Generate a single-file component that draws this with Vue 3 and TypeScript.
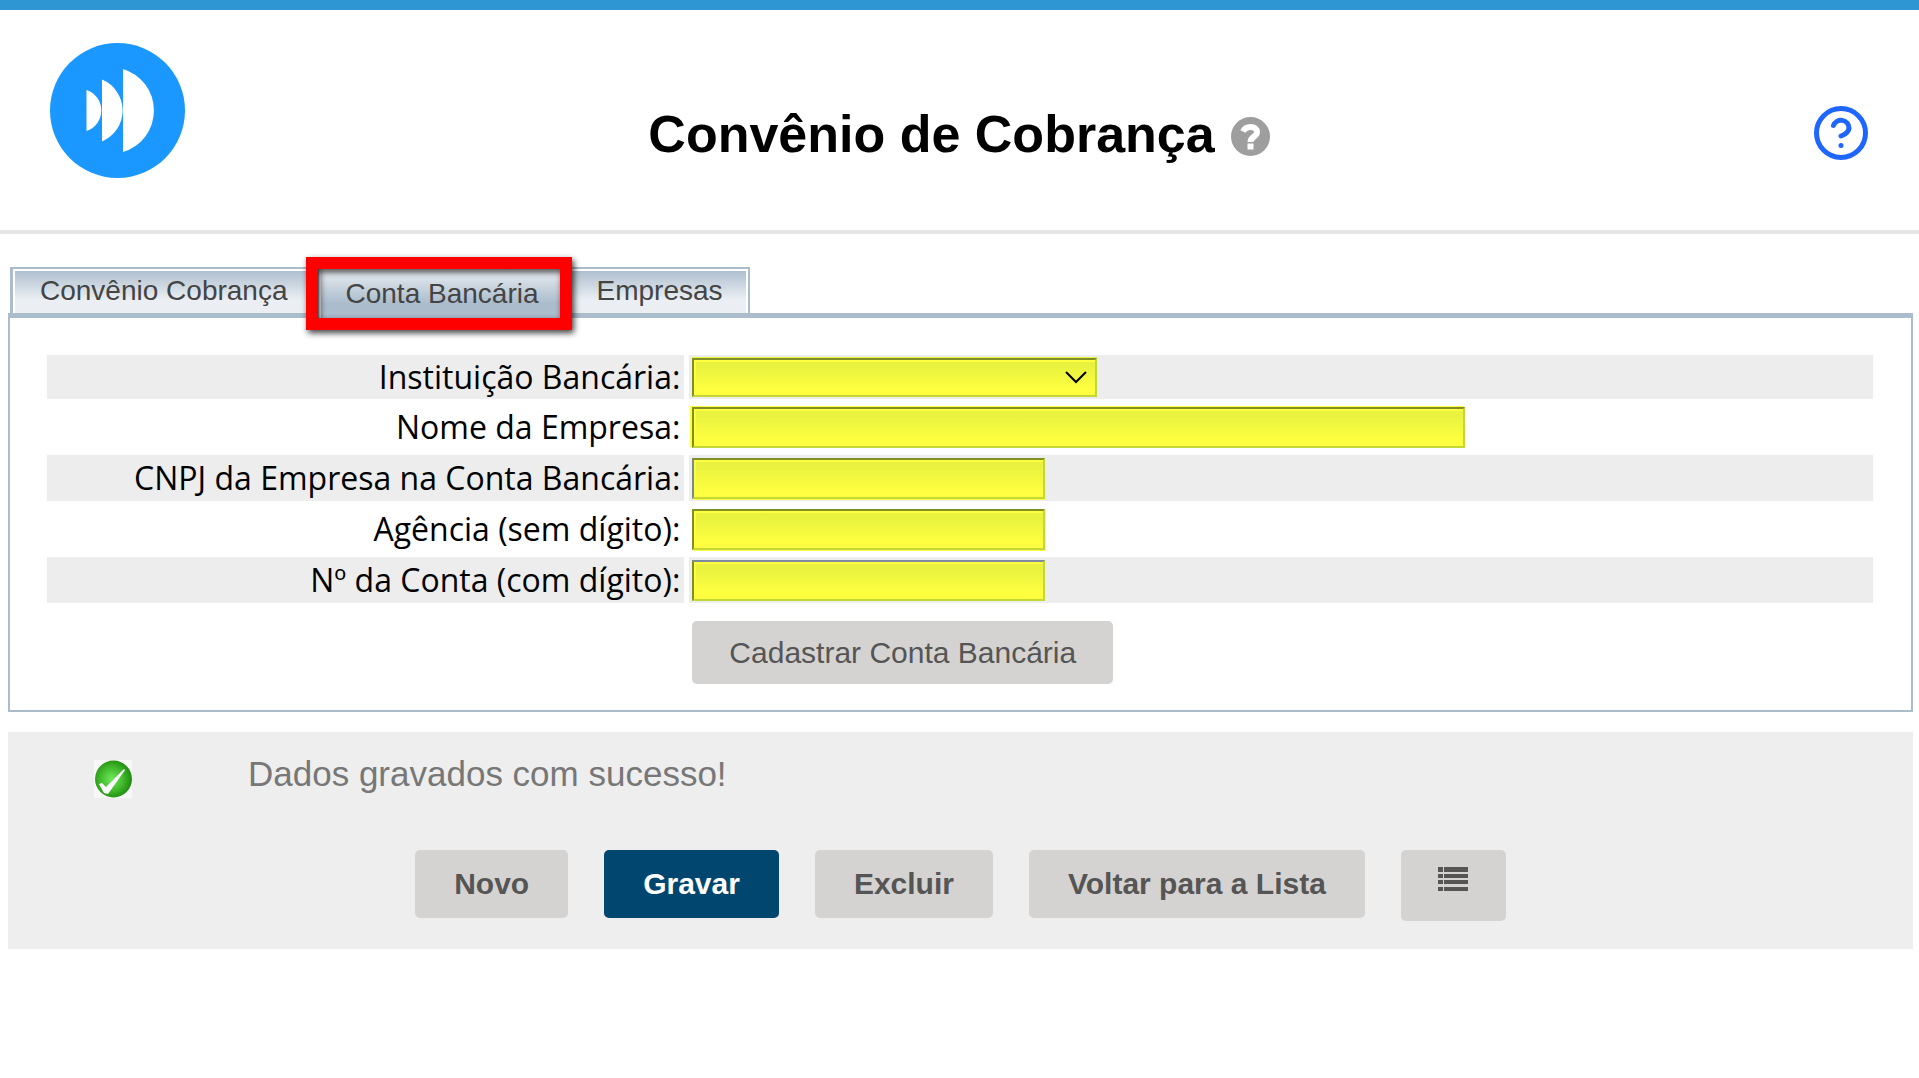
<script setup lang="ts">
import { ref } from 'vue'

interface Field {
  id: string
  label: string
  kind: 'select' | 'text'
  size: 'bank' | 'wide' | 'short'
  tone: string
}

interface Action {
  label: string
  primary?: boolean
}

const tabs = ['Convênio Cobrança', 'Conta Bancária', 'Empresas']
const activeTab = ref(1)

const fields: Field[] = [
  { id: 'banco', label: 'Instituição Bancária:', kind: 'select', size: 'bank', tone: 'glow-top' },
  { id: 'nome', label: 'Nome da Empresa:', kind: 'text', size: 'wide', tone: 'glow-start' },
  { id: 'cnpj', label: 'CNPJ da Empresa na Conta Bancária:', kind: 'text', size: 'short', tone: 'glow-end edge-left' },
  { id: 'agencia', label: 'Agência (sem dígito):', kind: 'text', size: 'short', tone: 'glow-end' },
  { id: 'conta', label: 'Nº da Conta (com dígito):', kind: 'text', size: 'short', tone: 'edge-top' },
]

const actions: Action[] = [
  { label: 'Novo' },
  { label: 'Gravar', primary: true },
  { label: 'Excluir' },
  { label: 'Voltar para a Lista' },
]
</script>

<template>
  <div class="page">
    <header class="header">
      <svg class="logo" viewBox="0 0 135 135" aria-hidden="true">
        <circle cx="67.5" cy="67.5" r="67.5" fill="#1a98ff" />
        <path
          fill="#fff"
          d="M36.500 47a21.600 21.600 0 0 1 0 41zM52 36.500a33.600 33.600 0 0 1 0 62zM73 26a43.300 43.300 0 0 1 0 83z"
        />
      </svg>
      <div class="title">
        <h1>Convênio de Cobrança</h1>
        <svg class="title-help" viewBox="0 0 39 39" aria-hidden="true">
          <circle cx="19.5" cy="19.500" r="19.500" fill="#9e9e9e" />
          <path fill="none" stroke="#fff" stroke-width="6" d="M12 14.500c1.500-3 4-4.500 7.500-4.500 4 0 6.500 2 6.500 5 0 5-6.500 4.500-6.500 10" />
          <rect x="16.500" y="26.500" width="6" height="6" fill="#fff" />
        </svg>
      </div>
      <a class="help" href="#ajuda" aria-label="Ajuda">
        <svg viewBox="0 0 54 54" fill="none" stroke="#1f66ff" stroke-width="5" stroke-linecap="round">
          <circle cx="27" cy="27" r="24.500" />
          <path d="M19.500 19.500a8 8 0 0 1 15.500 2.500c0 5.300-8 8-8 8" />
          <path d="M27 39.500h.01" />
        </svg>
      </a>
    </header>

    <main class="content">
      <nav class="tabs">
        <button
          v-for="(tab, i) in tabs"
          :key="tab"
          type="button"
          class="tab"
          :class="{ active: i === activeTab }"
          @click="activeTab = i"
        >
          {{ tab }}
          <span v-if="i === activeTab" class="marker"></span>
        </button>
      </nav>

      <form class="panel" @submit.prevent>
        <div v-for="field in fields" :key="field.id" class="row">
          <label :for="field.id">{{ field.label }}</label>
          <div class="cell">
            <div v-if="field.kind === 'select'" class="select" :class="field.size">
              <select :id="field.id" class="control" :class="field.tone">
                <option value=""></option>
              </select>
              <svg class="chevron" viewBox="0 0 22 13" aria-hidden="true">
                <path fill="none" stroke="#000" stroke-width="2" d="M1 1l10 10L21 1" />
              </svg>
            </div>
            <input v-else :id="field.id" type="text" class="control" :class="[field.size, field.tone]" />
          </div>
        </div>
        <div class="submit">
          <button type="submit" class="btn">Cadastrar Conta Bancária</button>
        </div>
      </form>

      <footer class="footer">
        <div class="status">
          <svg class="status-icon" viewBox="0 0 38 38" aria-hidden="true">
            <defs>
              <radialGradient id="okFill" cx="0.45" cy="0.5" r="0.55">
                <stop offset="0" stop-color="#6fe95a" />
                <stop offset="0.55" stop-color="#45bb30" />
                <stop offset="1" stop-color="#1e8a0c" />
              </radialGradient>
            </defs>
            <rect width="38" height="38" fill="#f8f8f8" />
            <circle cx="19.500" cy="19" r="18.500" fill="url(#okFill)" />
            <path fill="#fff" d="M5 24l3-1 4 4L30 9l1 1-17 24-4-1z" />
          </svg>
          <p>Dados gravados com sucesso!</p>
        </div>
        <div class="actions">
          <button
            v-for="action in actions"
            :key="action.label"
            type="button"
            class="btn bold"
            :class="{ primary: action.primary }"
          >
            {{ action.label }}
          </button>
          <button type="button" class="btn list" aria-label="Lista">
            <svg viewBox="0 0 30 24" fill="#555" aria-hidden="true">
              <path d="M0 0h5v5H0zM6 0h24v5H6zM0 7h5v4H0zM6 7h24v4H6zM0 13h5v4H0zM6 13h24v4H6zM0 20h5v4H0zM6 20h24v4H6z" />
            </svg>
          </button>
        </div>
      </footer>
    </main>
  </div>
</template>

<style>
body {
  margin: 0;
  background: #fff;
}
</style>

<style scoped>
.page {
  font-family: "Liberation Sans", Arial, sans-serif;
  border-top: 10px solid #2f96d4;
}

.header {
  display: grid;
  grid-template-columns: 1fr auto 1fr;
  align-items: center;
  min-height: 180px;
  padding: 33px 51px 7px 50px;
  border-bottom: 4px solid #e5e5e5;
}

.logo {
  width: 135px;
  height: 135px;
  align-self: start;
}

.title {
  display: flex;
  align-items: center;
  gap: 16px;
  padding-top: 2px;
}

h1 {
  margin: 0;
  font-size: 52px;
  line-height: 60px;
}

.title-help {
  width: 39px;
  height: 39px;
  margin-top: 4px;
}

.help {
  justify-self: end;
  display: flex;
}

.help svg {
  width: 54px;
  height: 54px;
}

.content {
  padding: 33px 6px 0 8px;
}

.tabs {
  display: flex;
  gap: 2px;
  padding-left: 2px;
}

.tab {
  position: relative;
  box-sizing: border-box;
  height: 46px;
  padding: 0 25px 0 27px;
  border: 2px solid #abbccd;
  border-bottom: 0;
  background: linear-gradient(#abbccd, #ebeff3 70%);
  box-shadow: inset 2px 2px #fff, inset -2px 0 #fff;
  color: #444;
  font: 28px/44px "Liberation Sans", Arial, sans-serif;
}

.tab:first-child {
  border-left-width: 3px;
}

.tab.active {
  z-index: 1;
  height: 51px;
  margin-bottom: -5px;
  background: linear-gradient(#ebeff3, #abbccd 70%);
  line-height: 50px;
}

.marker {
  position: absolute;
  inset: -12px -8px -12px -13px;
  border: 12px solid #f00;
  filter: drop-shadow(2px 3px 3px rgb(0 0 0 / 75%));
  pointer-events: none;
}

.panel {
  display: flex;
  flex-direction: column;
  gap: 5px;
  padding: 37px 38px 26px 37px;
  border: 2px solid #abbccd;
  border-top-width: 5px;
}

.row,
.submit {
  display: grid;
  grid-template-columns: minmax(0, 7fr) minmax(0, 13fr);
  gap: 5px;
}

.row label {
  padding-right: 4px;
  text-align: right;
  font: 32px/46px "Open Sans", sans-serif;
}

.row:first-child label {
  line-height: 44px;
}

.row:nth-child(odd) > * {
  background: #ededed;
}

.cell {
  display: flex;
  align-items: center;
  padding-left: 3px;
}

.control {
  box-sizing: border-box;
  height: 41px;
  max-width: 100%;
  margin: 0;
  padding: 0 6px;
  border: 2px solid;
  border-color: #7f8e25 #c3d836 #c3d836 #7f8e25;
  border-radius: 0;
  outline: 0;
  appearance: none;
  background: linear-gradient(#e9f33f 20%, #ffff3f 85%);
  font: 28px/36px "Liberation Sans", Arial, sans-serif;
}

.glow-top {
  box-shadow: inset 2px 2px #ffff3f, 0 -1px #e9f33f;
}

.glow-start {
  box-shadow: inset 2px 2px #ffff3f, -2px -1px #ffff3f;
}

.glow-end {
  box-shadow: inset 2px 2px #ffff3f, 1px 1px #ffff3f;
}

.edge-left {
  border-left-color: #7b8a8c;
}

.edge-top {
  border-top-color: #7b8ca0;
  box-shadow: inset 2px 2px #ffff3f;
}

.wide {
  width: 773px;
}

.short {
  width: 353px;
}

.select {
  position: relative;
  display: flex;
}

.bank {
  width: 405px;
}

.select .control {
  width: 100%;
  height: 39px;
}

.chevron {
  position: absolute;
  top: 13px;
  right: 10px;
  width: 22px;
  height: 13px;
  pointer-events: none;
}

.submit {
  padding-top: 13px;
}

.submit .btn {
  grid-column: 2;
  justify-self: start;
  margin-left: 3px;
}

.btn {
  height: 63px;
  padding: 0 37px;
  border: 0;
  border-radius: 5px;
  background: #d5d3d1;
  color: #555;
  font: 30px/34px "Liberation Sans", Arial, sans-serif;
}

.btn.bold {
  height: 68px;
  padding: 0 39px;
  font-weight: bold;
}

.btn.primary {
  background: #00466f;
  color: #fff;
}

.btn.list {
  display: flex;
  justify-content: center;
  width: 105px;
  height: 71px;
  padding: 17px 0 0;
}

.list svg {
  width: 30px;
  height: 24px;
}

.footer {
  margin-top: 20px;
  padding: 22px 0 28px;
  background: #eee;
}

.status {
  display: flex;
  align-items: flex-start;
  gap: 116px;
  padding-left: 86px;
}

.status-icon {
  width: 38px;
  height: 38px;
  margin-top: 6px;
}

.status p {
  margin: 0;
  color: #777;
  font-size: 35px;
  line-height: 40px;
}

.actions {
  display: flex;
  align-items: flex-start;
  justify-content: center;
  gap: 36px;
  margin-top: 52px;
}
</style>
